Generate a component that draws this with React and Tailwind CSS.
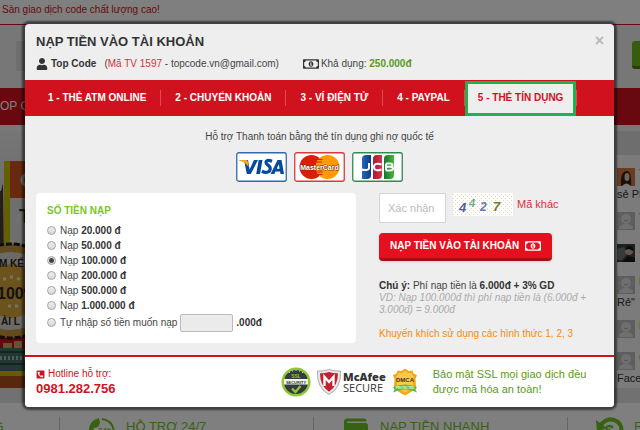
import React, { useState } from 'react'
import { FaUser, FaRegMoneyBillAlt, FaPhoneSquareAlt, FaWallet } from 'react-icons/fa'

const tabs = [
    '1 - THẺ ATM ONLINE',
    '2 - CHUYỂN KHOẢN',
    '3 - VÍ ĐIỆN TỬ',
    '4 - PAYPAL',
    '5 - THẺ TÍN DỤNG',
]

const amounts = ['20.000', '50.000', '100.000', '200.000', '500.000', '1.000.000']

const messages = [
    { name: 'Tuấn', text: 'sẻ PHP', photo: 'orange' },
    { name: 'Tùng' },
    { name: 'An', photo: 'dark' },
    { name: 'Lan', text: 'Rẻ"' },
    { name: 'Linh' },
    { name: 'Cường', text: 'Facebook' },
]

const radioClass =
    'size-[9px] shrink-0 appearance-none rounded-full border border-[#a3a3a3] bg-[linear-gradient(#eee,#d8d8d8)] checked:bg-[radial-gradient(circle,#444_2px,#e2e2e2_3px)]'

function VisaCard() {
    return (
        <svg viewBox="0 0 51 30" className="h-[30px] w-[51px]" role="img" aria-label="Visa">
            <rect x=".75" y=".75" width="49.5" height="28.5" rx="2" fill="#fff" stroke="#3568a8" strokeWidth="1.3" />
            <path d="M8 8h4l1.6 9.500L18 8h4l-7.200 14h-4z" fill="#07499a" />
            <path d="M3 8h7.200q1.400 0 1.700 1.800l.8 5.200Q9 10 3 8.600z" fill="#f6a51c" />
            <path d="M22.700 8h3.800l-2.500 14h-3.800z" fill="#07499a" />
            <path
                d="M36 9.300q-6-2.300-6 1.200c0 2.700 5 2.900 4.200 6.800-.8 3.700-5 3.600-8.300 2"
                fill="none"
                stroke="#07499a"
                strokeWidth="3.200"
            />
            <path d="M34.500 22 41.500 8h4l2.500 14h-3.500l-.4-2.500h-4.600L38.300 22zm6.200-5.200h2.900l-.8-4.600z" fill="#07499a" />
        </svg>
    )
}

function MasterCard() {
    return (
        <svg viewBox="0 0 51 30" className="h-[30px] w-[51px]" role="img" aria-label="MasterCard">
            <rect x=".75" y=".75" width="49.5" height="28.5" rx="2" fill="#fff" stroke="#d93a3e" strokeWidth="1.3" />
            <circle cx="17.500" cy="15" r="12" fill="#d81e05" />
            <circle cx="33.500" cy="15" r="12" fill="#ff9a00" />
            <path d="M22 7.500h6.500M22 10h6M22 20h6.500M22 22.500h6.500" stroke="#d81e05" strokeWidth="1.200" />
            <text
                x="25.500"
                y="18"
                textAnchor="middle"
                fontFamily="Liberation Sans, sans-serif"
                fontSize="7"
                fontWeight="700"
                fill="#fff"
                stroke="#7c2c18"
                strokeWidth="1"
                paintOrder="stroke"
            >
                MasterCard
            </text>
        </svg>
    )
}

function JcbCard() {
    return (
        <svg viewBox="0 0 51 30" className="h-[30px] w-[51px]" role="img" aria-label="JCB">
            <defs>
                <linearGradient id="jcb-blue">
                    <stop offset="0" stopColor="#2468b8" />
                    <stop offset="1" stopColor="#0b3c82" />
                </linearGradient>
                <linearGradient id="jcb-red">
                    <stop offset="0" stopColor="#a51c32" />
                    <stop offset="1" stopColor="#d9314a" />
                </linearGradient>
                <linearGradient id="jcb-green">
                    <stop offset="0" stopColor="#11772d" />
                    <stop offset="1" stopColor="#4bb43c" />
                </linearGradient>
            </defs>
            <rect x=".75" y=".75" width="49.5" height="28.5" rx="2" fill="#fff" stroke="#2e8b50" strokeWidth="1.3" />
            <path d="M10 7q0-4 4-4h5v20q0 4-4 4h-5z" fill="url(#jcb-blue)" />
            <path d="M21 7q0-4 4-4h5v20q0 4-4 4h-5z" fill="url(#jcb-red)" />
            <path d="M32 7q0-4 4-4h6v20q0 4-4 4h-6z" fill="url(#jcb-green)" />
            <path
                d="M17 11v5q0 3-8 1.500M29.500 12.500c-4-1.500-7.500-1-7.500 2.500s3.500 4 7.500 2.500M34 11.500h4q2.500 0 2.500 1.600t-2.500 1.700h-4m4 0q3 0 3 1.800t-3 1.900h-4m0-7v7"
                fill="none"
                stroke="#fff"
                strokeWidth="2"
            />
        </svg>
    )
}

function Captcha() {
    return (
        <svg viewBox="0 0 60 23" className="h-[23px] w-[60px]" role="img" aria-label="4427">
            <defs>
                <pattern id="dots" width="4" height="4" patternUnits="userSpaceOnUse">
                    <rect width="4" height="4" fill="#fdfdfb" />
                    <path d="M0 1.500h1M2 3.500h1" stroke="#ead8c2" />
                </pattern>
            </defs>
            <rect width="60" height="23" fill="url(#dots)" />
            <g fontFamily="Liberation Sans, sans-serif" fontStyle="italic">
                <text x="6" y="19" fontSize="13" fontWeight="700" fill="#4a5fae">4</text>
                <text x="16" y="14" fontSize="11" fontWeight="700" fill="#6fae8e">4</text>
                <text x="27" y="18" fontSize="12" fontWeight="700" fill="#6478b8">2</text>
                <text x="40" y="18" fontSize="13" fontWeight="700" fill="#7c7635">7</text>
            </g>
        </svg>
    )
}

function SslBadge() {
    return (
        <svg viewBox="0 0 30 30" className="size-[30px]" role="img" aria-label="SSL Security">
            <circle cx="15" cy="15" r="14.500" fill="#8cc832" />
            <circle cx="15" cy="15" r="12" fill="#343a40" />
            <path d="M8 5.500h1M11 4h1M14.500 3.500h1M18 4h1M21 5.500h1" stroke="#ddd" />
            <text x="15" y="10.500" textAnchor="middle" fontSize="5" fontWeight="700" fontFamily="Liberation Sans, sans-serif" fill="#8cc832">SSL</text>
            <rect x="3" y="12" width="24" height="5.500" fill="#f4f7ef" />
            <text x="15" y="16.500" textAnchor="middle" fontSize="4" fontWeight="700" fontFamily="Liberation Sans, sans-serif" fill="#333">SECURITY</text>
            <path d="m11 21.500 3.500 3.500 5-6" fill="none" stroke="#8cc832" strokeWidth="2.400" />
        </svg>
    )
}

function McAfee() {
    return (
        <div className="flex items-center gap-[2px]">
            <svg viewBox="0 0 24 26" className="h-[26px] w-6" aria-hidden="true">
                <path d="M12 .5Q18 2.500 23.500 2q1 17-11.500 23.500Q-.5 19 .5 2 6 2.500 12 .5z" fill="#e6e8ea" stroke="#8c9299" strokeWidth=".7" />
                <path d="M12 3q4.500 1.500 9 1.300Q21 17 12 22.800 3 17 3 4.300 7.500 4.500 12 3z" fill="#c5202e" />
                <path d="M7.500 17V8L12 13l4.500-5v9" fill="none" stroke="#fff" strokeWidth="2.400" />
            </svg>
            <p className="font-['Open_Sans',sans-serif] text-[11px] leading-[11px] text-[#333]">
                <b className="block font-extrabold">McAfee</b>
                <span className="block">SECURE</span>
            </p>
        </div>
    )
}

function DmcaBadge() {
    return (
        <svg viewBox="0 0 26 28" className="h-7 w-[26px]" role="img" aria-label="DMCA Protected">
            <path d="m13 .5 3.500 2.500 4-.5 1 3 3.500 1.500-1.500 4 .5 8Q22 23 13 27.500 4 23 2 19l.5-8L1 7l3.500-1.500 1-3 4 .5z" fill="#f1a81d" />
            <path d="m13 3 3 2 3.500 0 1 2.500 1.500 1-1 3v7q-2 3-8 6-6-3-8-6v-7l-1-3 1.500-1 1-2.500L10 5z" fill="#fcc94a" />
            <text x="13" y="13.500" textAnchor="middle" fontSize="6" fontWeight="700" fontFamily="Liberation Sans, sans-serif" fill="#3c3417">DMCA</text>
            <path d="M1 19q12-5 24 0l-1.500 2.500 1.500 3-5-2q-7-2-14 0l-5 2 1.500-3z" fill="#58b947" />
            <text x="13" y="21" textAnchor="middle" fontSize="3" fontWeight="700" fontFamily="Liberation Sans, sans-serif" fill="#e8ffdc">PROTECTED</text>
        </svg>
    )
}

// Promo banner on the left edge of the page
function Banner() {
    return (
        <svg viewBox="0 0 240 257" className="h-[257px] w-60" aria-hidden="true">
            <defs>
                <linearGradient id="sky" x2="0" y2="1">
                    <stop offset="0" stopColor="#ececec" />
                    <stop offset="1" stopColor="#a9a9a9" />
                </linearGradient>
            </defs>
            <rect width="240" height="257" fill="url(#sky)" />
            <path d="M0 60h1l2-8 1 78H0z" fill="#4b3b33" />
            <rect x="4" y="30" width="6" height="84" fill="#c9c000" />
            <rect x="10" y="30" width="230" height="37" fill="#d2531c" />
            <rect x="10" y="67" width="230" height="45" fill="#dedede" />
            <g fontFamily="Liberation Sans, sans-serif" fontWeight="700">
                <text x="20" y="56" fontSize="21" fill="#dcdcdc">C</text>
                <text x="19" y="92" fontSize="20" fill="#333">T</text>
            </g>
            <rect y="205" width="240" height="14" fill="#c40d20" />
            <circle cx="11" cy="160" r="47" fill="#c9963a" stroke="#1f1a14" strokeWidth="3" strokeDasharray="6 2" />
            <circle cx="11" cy="160" r="39" fill="#d9d5cc" />
            <circle cx="11" cy="160" r="27" fill="#d9a63c" />
            <g fontFamily="Liberation Sans, sans-serif" fontWeight="700" fill="#29241f">
                <text x="-1" y="136" fontSize="10">M KẾ</text>
                <text x="-3" y="168" fontSize="16">100%</text>
                <text x="1" y="194" fontSize="10">ẢI L</text>
            </g>
            <path d="M3 148h3M10 146h3M17 148h3M8 175h3M15 175h3" stroke="#eee5c8" strokeWidth="3" />
            <path d="M3 212h9v5H3zM14 210h8v7h-8z" fill="#d1a45e" />
            <rect y="217" width="240" height="25" fill="#47706b" />
            <path d="M0 221h240M0 233h240" stroke="#244640" strokeWidth="2" />
            <path d="M0 227h240" stroke="#a7b8a8" strokeWidth="4" strokeDasharray="2 2" />
            <rect y="240" width="240" height="5" fill="#d5b700" />
            <rect y="245" width="240" height="12" fill="#b0501d" />
        </svg>
    )
}

function Avatar({ photo }) {
    if (photo === 'orange') {
        return (
            <svg viewBox="0 0 18 18" className="size-[18px] shrink-0" aria-hidden="true">
                <path d="M0 0h18v18H0z" fill="#d9783f" />
                <path d="M4 18q-1-15 6-15 5 1 4 15z" fill="#2c211e" />
                <ellipse cx="10" cy="9" rx="2.500" ry="4" fill="#e6c6ac" />
                <path d="M5 18q4-5 9 0z" fill="#eee" />
            </svg>
        )
    }
    if (photo === 'dark') {
        return (
            <svg viewBox="0 0 18 18" className="size-[18px] shrink-0" aria-hidden="true">
                <path d="M0 0h18v18H0z" fill="#384438" />
                <path d="M0 5l7-2 3 7-5 6H0z" fill="#6f7770" />
                <circle cx="12" cy="7" r="4" fill="#c9aa95" />
                <path d="M8 6q1-5 6-4 3 1 2 5l-4-2z M5 18l6-6 7 2v4z" fill="#17181a" />
            </svg>
        )
    }
    return (
        <svg viewBox="0 0 18 18" className="size-[18px] shrink-0" aria-hidden="true">
            <path d="M0 0h18v18H0z" fill="#bcbcbc" />
            <circle cx="9" cy="7" r="5" fill="#dedede" />
            <path d="M2 17q0-4 5-5h4q5 1 5 5z" fill="#dedede" />
            <path d="M7 8q2 2 4 0" fill="none" stroke="#aaa" />
        </svg>
    )
}

function SupportIcon() {
    return (
        <svg viewBox="0 0 28 28" className="size-7 shrink-0" aria-hidden="true">
            <path d="M11 1Q0 4 1 15q2 10 11 12l2-4-3-3-3 1q-4-5-2-10l4-1 2-4z" fill="#6fc423" />
            <path d="M14 2q10 1 12 12v4" fill="none" stroke="#6fc423" strokeWidth="2" />
            <text x="10" y="16" fontSize="8" fontWeight="700" fontFamily="Liberation Sans, sans-serif" fill="#6fc423">24h</text>
        </svg>
    )
}

function RefundIcon() {
    return (
        <svg viewBox="0 0 28 28" className="size-7 shrink-0" aria-hidden="true">
            <path d="M4 9Q12-2 22 5q5 5 3 13" fill="none" stroke="#6fc423" strokeWidth="4" />
            <path d="M0 3l1 12 10-4z" fill="#6fc423" />
            <text x="9" y="20" fontSize="16" fontWeight="700" fontFamily="Liberation Sans, sans-serif" fill="#6fc423">$</text>
        </svg>
    )
}

const features = [
    { label: 'GIAO DỊCH NHANH CHÓNG', icon: null },
    { label: 'HỖ TRỢ 24/7', icon: <SupportIcon /> },
    { label: 'NẠP TIỀN NHANH', icon: <FaWallet className="h-6 w-7 shrink-0" /> },
    { label: 'RÚT TIỀN', icon: <RefundIcon /> },
]

function SitePage() {
    return (
        <div className="flex h-full flex-col bg-white">
            <div className="h-6 shrink-0 px-[2px] text-[10px] leading-5 text-[#cf121d]">
                Sàn giao dịch code chất lượng cao!
            </div>
            <header className="flex h-16 shrink-0 items-start justify-between border-t border-[#cf121d] bg-[#eee] pt-4 pl-4">
                <div className="h-[30px] w-40 bg-[#ddd]" />
                <div className="h-7 w-2 rounded-l-[3px] border-b-[3px] border-[#4c7c10] bg-[#70b91c]" />
            </header>
            <nav className="h-[37px] shrink-0 bg-[#cf121d] text-[12px] leading-[37px] text-white">
                OP CODE
            </nav>
            <main className="flex shrink-0 justify-between bg-[#f1f1f1] pt-[6px]">
                <Banner />
                <aside className="w-6 overflow-hidden bg-[#f6f6f6] text-[11px] text-[#333]">
                    <div className="h-6 bg-[#dcdcdc]" />
                    <ul className="h-[233px] pt-[13px] pl-[1px]">
                        {messages.map((m) => (
                            <li key={m.name} className={m.text ? 'h-[44px]' : 'h-8'}>
                                <div className="flex gap-1">
                                    <Avatar photo={m.photo} />
                                    <span className="leading-[10px] font-bold text-[#6fc423]">{m.name}</span>
                                </div>
                                {m.text && <p className="leading-4 whitespace-nowrap">{m.text}</p>}
                            </li>
                        ))}
                    </ul>
                </aside>
            </main>
            <div className="h-[15px] shrink-0 bg-[#e2e2e2]" />
            <footer className="flex flex-1 justify-center overflow-hidden bg-white pt-[14px] pr-[14px]">
                {features.map((f) => (
                    <div
                        key={f.label}
                        className="flex h-7 w-[254px] shrink-0 gap-[10px] border-l border-[#ccc] pl-7 text-[13px] leading-5 whitespace-nowrap text-[#6fc423]"
                    >
                        {f.icon}
                        {f.label}
                    </div>
                ))}
            </footer>
        </div>
    )
}

export default function App() {
    const [tab, setTab] = useState(4)
    const [amount, setAmount] = useState('100.000')

    return (
        <div className="relative h-screen overflow-hidden font-['Liberation_Sans',Arial,sans-serif]">
            <SitePage />
            <div className="absolute inset-0 bg-black/50 pt-6 pr-[26px] pl-[25px]">
                <div
                    role="dialog"
                    aria-labelledby="deposit-title"
                    className="overflow-hidden rounded-[4px] bg-[#eee] text-[10px] leading-3 text-[#444] shadow-[0_0_2px_3px_rgba(0,0,0,0.5)]"
                >
                    <header className="flex h-14 justify-between pt-[10px] pr-[10px] pl-[11px]">
                        <div>
                            <h1 id="deposit-title" className="text-[13px] leading-4 font-bold text-[#333]">
                                NẠP TIỀN VÀO TÀI KHOẢN
                            </h1>
                            <div className="mt-[6px] flex items-center">
                                <FaUser className="size-3 text-[#333]" />
                                <b className="ml-[3px] text-[#333]">Top Code</b>
                                <span className="ml-2">
                                    (<span className="text-[#d9303c]">Mã TV 1597</span> - topcode.vn@gmail.com)
                                </span>
                                <FaRegMoneyBillAlt className="ml-6 size-4 text-[#333]" />
                                <span className="ml-[2px]">
                                    Khả dụng: <b className="text-[#5b9a1c]">250.000đ</b>
                                </span>
                            </div>
                        </div>
                        <button aria-label="Đóng" className="h-[14px] text-[16px] leading-[14px] font-bold text-[#b8b8b8]">
                            ×
                        </button>
                    </header>

                    <nav className="flex h-[36px] bg-[#cf121d] pl-[9px]">
                        {tabs.map((label, i) => (
                            <div key={label} className="flex items-center">
                                <button
                                    onClick={() => setTab(i)}
                                    className={
                                        tab === i
                                            ? 'h-[35px] border-[3px] border-[#1fb14f] bg-[#eee] px-[10px] font-bold text-[#cf121d]'
                                            : 'h-[35px] px-[14px] font-bold text-white'
                                    }
                                >
                                    {label}
                                </button>
                                <span className="h-4 w-px bg-[#e04a50]" />
                            </div>
                        ))}
                    </nav>

                    <section className="px-[11px] pt-[13px] pb-3">
                        <p className="text-center leading-4">
                            Hỗ trợ Thanh toán bằng thẻ tín dụng ghi nợ quốc tế
                        </p>
                        <div className="mt-[7px] flex justify-center gap-[7px]">
                            <VisaCard />
                            <MasterCard />
                            <JcbCard />
                        </div>

                        <div className="mt-[11px] grid grid-cols-[10fr_7fr] gap-[23px]">
                            <fieldset className="h-[150px] rounded-[4px] bg-white pt-3 pl-[11px]">
                                <h2 className="mb-[6px] font-bold text-[#78c81e]">SỐ TIỀN NẠP</h2>
                                {amounts.map((a) => (
                                    <label key={a} className="flex h-[15px] items-center gap-1">
                                        <input
                                            type="radio"
                                            name="amount"
                                            className={radioClass}
                                            checked={amount === a}
                                            onChange={() => setAmount(a)}
                                        />
                                        <span>
                                            Nạp <b className="text-[#333]">{a} đ</b>
                                        </span>
                                    </label>
                                ))}
                                <div className="flex h-[19px] items-center gap-[3px]">
                                    <label className="flex items-center gap-1">
                                        <input
                                            type="radio"
                                            name="amount"
                                            className={radioClass}
                                            checked={amount === 'custom'}
                                            onChange={() => setAmount('custom')}
                                        />
                                        Tự nhập số tiền muốn nạp
                                    </label>
                                    <input
                                        aria-label="Số tiền muốn nạp"
                                        className="h-[18px] w-[53px] rounded-[2px] border border-[#bbb] bg-[#ebebeb]"
                                    />
                                    <b className="text-[#333]">.000đ</b>
                                </div>
                            </fieldset>

                            <div>
                                <div className="flex items-start">
                                    <input
                                        aria-label="Xác nhận"
                                        placeholder="Xác nhận"
                                        className="mr-[7px] h-[30px] w-[67px] border border-[#d5d5d5] bg-white px-2 text-[11px] placeholder:text-[#bbb]"
                                    />
                                    <Captcha />
                                    <a href="#captcha" className="ml-1 pt-[3px] text-[11px] leading-4 text-[#d9303c]">
                                        Mã khác
                                    </a>
                                </div>
                                <button className="mt-[10px] flex h-7 items-center gap-[6px] rounded-[4px] border-b-[3px] border-[#a90e18] bg-[#e60f1e] px-[11px] font-bold text-white shadow">
                                    NẠP TIỀN VÀO TÀI KHOẢN
                                    <FaRegMoneyBillAlt className="size-4" />
                                </button>
                                <div className="mt-[19px]">
                                    <p>
                                        <b className="text-[#333]">Chú ý:</b> Phí nạp tiền là{' '}
                                        <b className="text-[#333]">6.000đ + 3% GD</b>
                                    </p>
                                    <p className="text-[#aaa] italic">
                                        VD: Nạp 100.000đ thì phí nạp tiền là (6.000đ + 3.000đ) = 9.000đ
                                    </p>
                                    <p className="mt-3 text-[#ff8a00]">
                                        Khuyến khích sử dụng các hình thức 1, 2, 3
                                    </p>
                                </div>
                            </div>
                        </div>
                    </section>

                    <footer className="flex h-[52px] items-center border-t-2 border-[#cf121d] bg-white px-[11px]">
                        <div className="w-[245px] text-[#cf121d]">
                            <p className="flex items-center gap-[3px] leading-[14px]">
                                <FaPhoneSquareAlt className="size-[9px]" />
                                Hotline hỗ trợ:
                            </p>
                            <p className="text-[13px] leading-4 font-bold">0981.282.756</p>
                        </div>
                        <div className="flex items-center gap-[6px]">
                            <SslBadge />
                            <McAfee />
                            <DmcaBadge />
                        </div>
                        <p className="ml-[15px] max-w-[156px] text-[11px] leading-[15px] text-[#5b9a1c]">
                            Bảo mật SSL mọi giao dịch đều được mã hóa an toàn!
                        </p>
                    </footer>
                </div>
            </div>
        </div>
    )
}
